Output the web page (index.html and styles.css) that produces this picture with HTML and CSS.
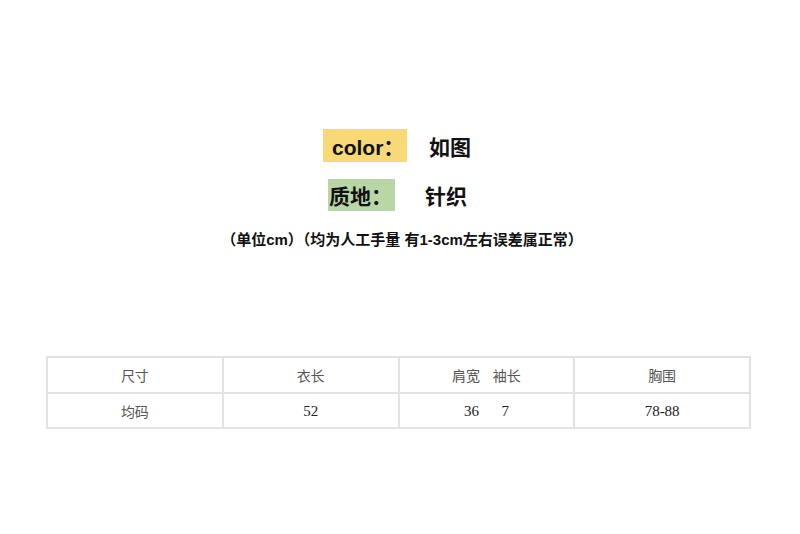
FILE: index.html
```html
<!DOCTYPE html>
<html lang="zh">
<head>
<meta charset="utf-8">
<link rel="stylesheet" href="styles.css">
</head>
<body>
<div class="page">
  <div class="attrs">
    <div class="attr attr-color">
      <span class="label label-yellow">color：</span>
      <span class="value">如图</span>
    </div>
    <div class="attr attr-material">
      <span class="label label-green">质地：</span>
      <span class="value">针织</span>
    </div>
  </div>
  <p class="note">（单位cm）（均为人工手量 有1-3cm左右误差属正常）</p>
  <table class="size-table">
    <tr class="head">
      <td>尺寸</td>
      <td>衣长</td>
      <td class="pre">肩宽    袖长</td>
      <td>胸围</td>
    </tr>
    <tr class="data">
      <td class="cjk">均码</td>
      <td>52</td>
      <td class="pre">36      7</td>
      <td>78-88</td>
    </tr>
  </table>
</div>
</body>
</html>
```
FILE: styles.css
```css
html, body {
  margin: 0;
  padding: 0;
  background: #ffffff;
}
.page {
  width: 800px;
  height: 534px;
  padding-top: 129px;
  box-sizing: border-box;
  font-family: "Liberation Sans", "Noto Sans CJK SC", sans-serif;
  color: #111;
}
.attrs {
  display: flex;
  flex-direction: column;
  gap: 17px;
}
.attr {
  display: flex;
  align-items: center;
}
.attr-color {
  margin-left: 323px;
  height: 33px;
}
.attr-material {
  margin-left: 328px;
  height: 32px;
}
.label {
  display: flex;
  align-items: center;
  box-sizing: border-box;
  height: 100%;
  font-weight: bold;
  font-size: 21px;
}
.label-yellow {
  background: #f8d877;
  width: 84px;
  padding-left: 9px;
}
.label-green {
  background: #b9d6a7;
  width: 67px;
  padding-left: 1px;
}
.value {
  font-family: "Noto Sans CJK SC", sans-serif;
  font-weight: bold;
  font-size: 21px;
}
.attr-color .value {
  margin-left: 22px;
}
.attr-material .value {
  margin-left: 30px;
}
.note {
  margin: 19px 0 0;
  padding-left: 4px;
  text-align: center;
  font-family: "Liberation Sans", "Noto Sans CJK SC", sans-serif;
  font-weight: bold;
  font-size: 15px;
  line-height: 20px;
  color: #111;
}
.size-table {
  margin: 106px 0 0 46px;
  width: 705px;
  border-collapse: collapse;
  table-layout: fixed;
}
.size-table td {
  border: 2px solid #e2e2e2;
  text-align: center;
  padding: 0;
}
.head td {
  height: 34px;
  font-family: "Noto Sans CJK SC", sans-serif;
  font-size: 14px;
  color: #555;
}
.data td {
  height: 31px;
  padding-top: 2px;
  font-family: "Liberation Serif", serif;
  font-size: 15px;
  color: #222;
}
.data td.cjk {
  font-family: "Noto Sans CJK SC", sans-serif;
  font-size: 14px;
  color: #555;
  padding-top: 0;
}
.pre {
  white-space: pre;
}
```
